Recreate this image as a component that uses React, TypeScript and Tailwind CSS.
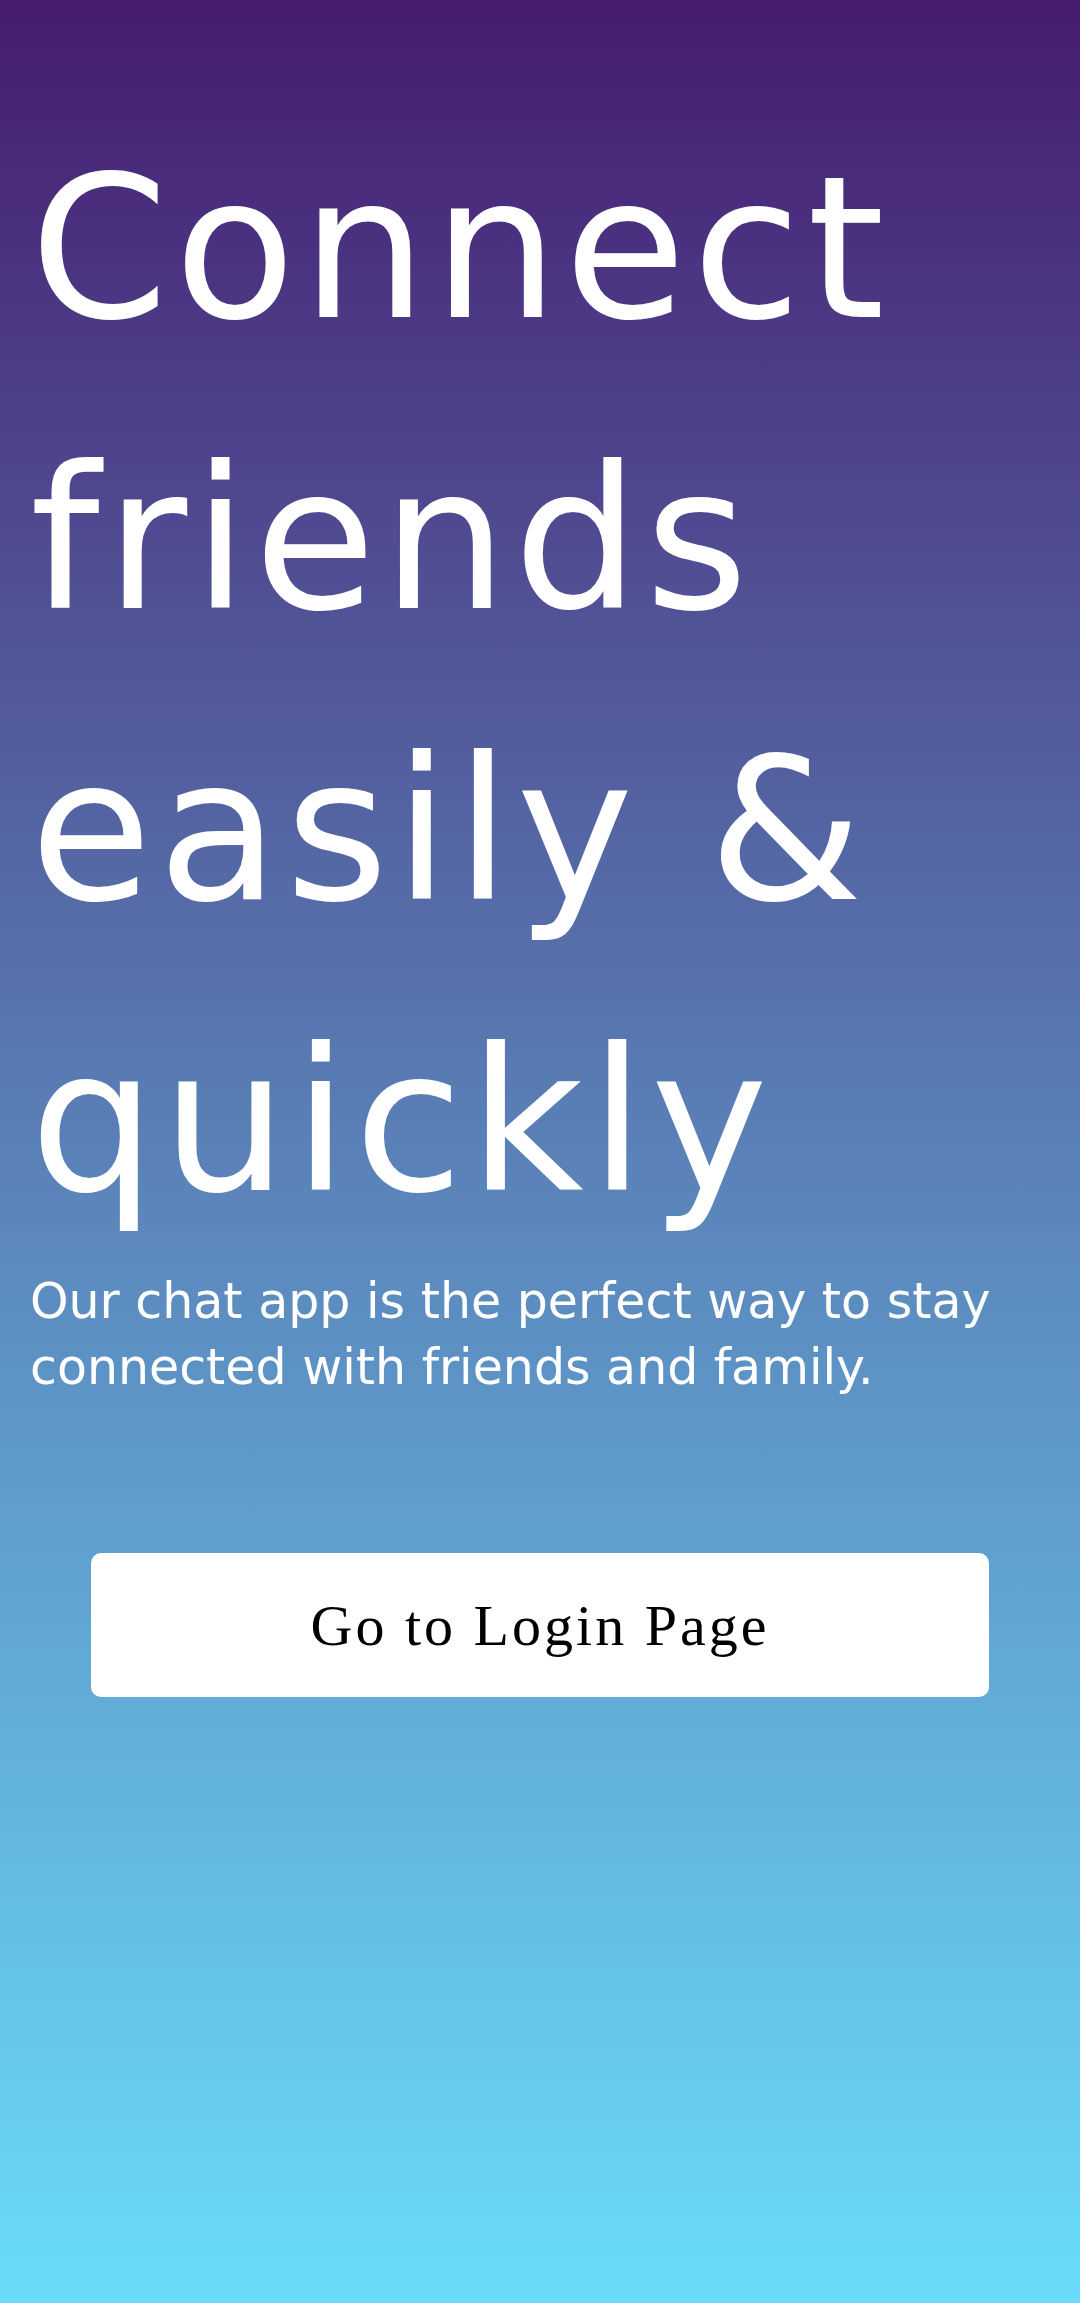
const Landing = () => {
    return (
        <div className="min-h-screen w-full bg-linear-to-b/srgb from-[#461c70] via-[#5a81b8] to-[#69dcfb] px-[30px] pt-[103px]">
            <h1 className="text-[198px] leading-[291px] tracking-[6px] text-white font-normal font-['DejaVu_Sans',sans-serif]">
                Connect friends easily &amp; quickly
            </h1>
            <p className="mt-[2px] text-[49px] leading-[66px] text-white font-['DejaVu_Sans',sans-serif]">
                Our chat app is the perfect way to stay connected with friends and family.
            </p>
            <div className="mt-[152px] px-[61px]">
                <button
                    type="button"
                    className="flex h-[144px] w-full items-center justify-center rounded-[10px] bg-white text-[58px] tracking-[3px] text-black font-['Liberation_Serif',serif]"
                >
                    Go to Login Page
                </button>
            </div>
        </div>
    )
}

export default function App() {
    return <Landing />;
}
